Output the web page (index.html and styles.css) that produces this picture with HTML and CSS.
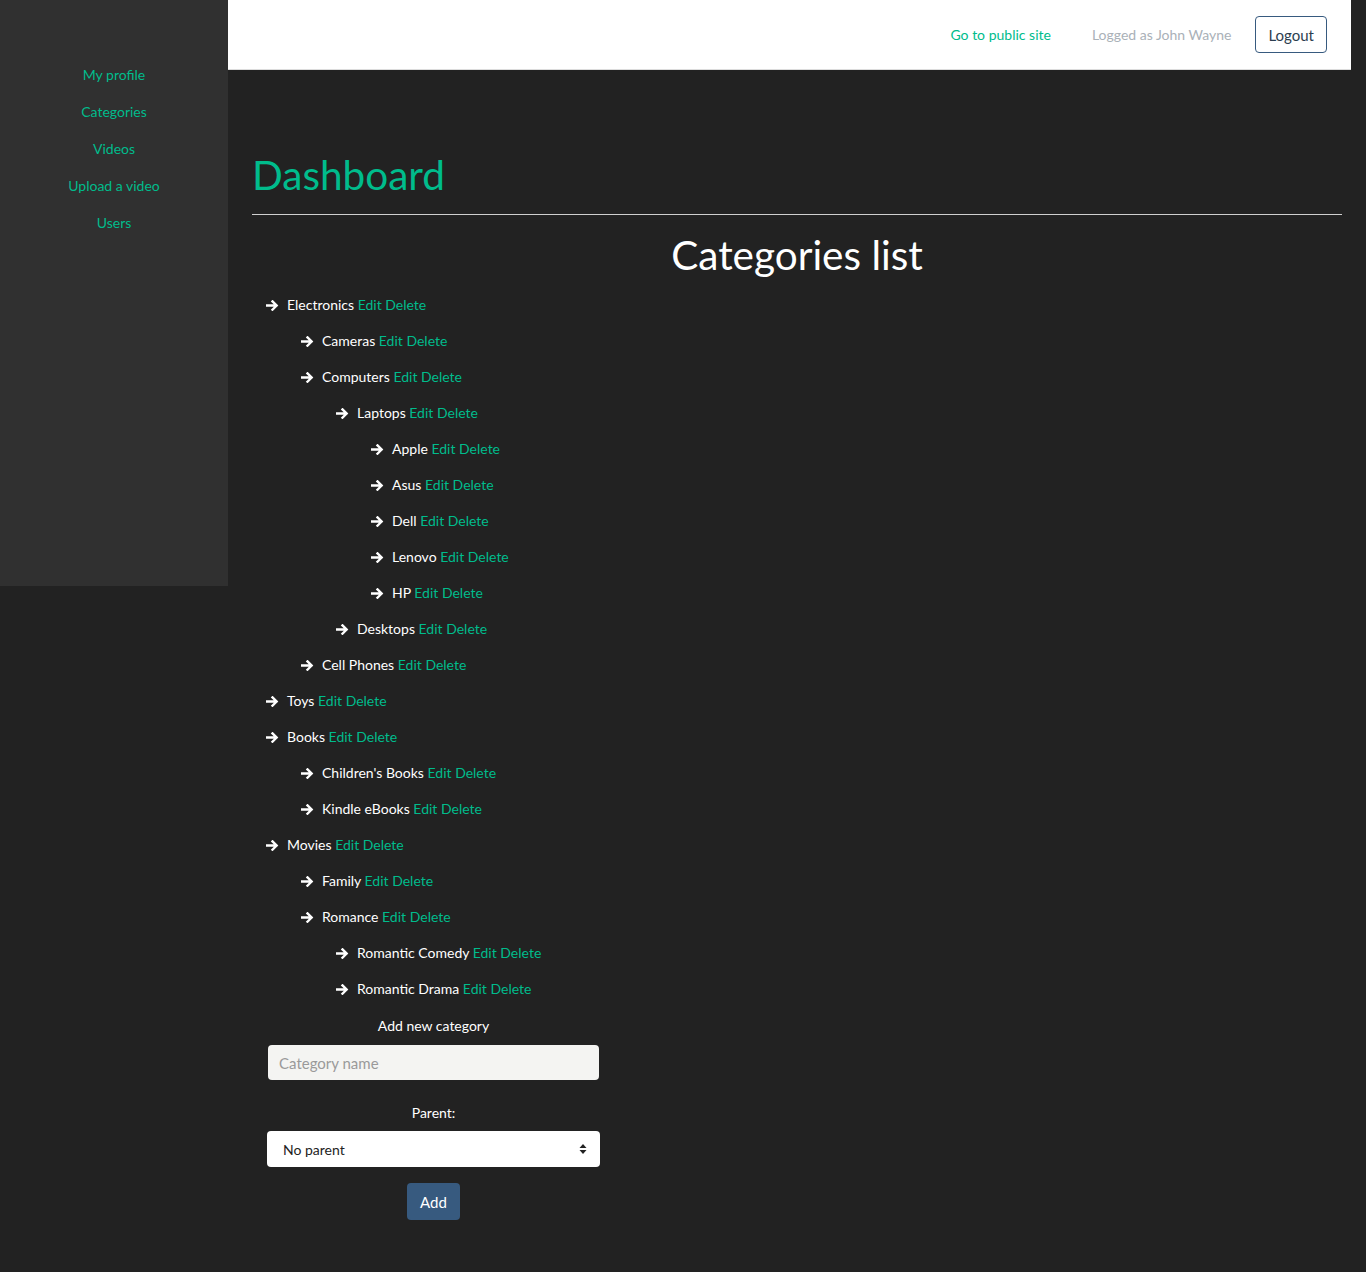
FILE: index.html
```html
<!DOCTYPE html>
<html>
<head>
<meta charset="utf-8">
<title>Dashboard</title>
<link rel="stylesheet" href="styles.css">
</head>
<body>
<div class="layout">
  <aside class="sidebar">
    <nav class="side-nav">
      <a href="#">My profile</a>
      <a href="#">Categories</a>
      <a href="#">Videos</a>
      <a href="#">Upload a video</a>
      <a href="#">Users</a>
    </nav>
  </aside>
  <div class="main">
    <header class="topbar">
      <a class="public" href="#">Go to public site</a>
      <span class="logged">Logged as John Wayne</span>
      <button class="logout">Logout</button>
    </header>
    <div class="content">
      <h1 class="title">Dashboard</h1>
      <hr class="rule">
      <h2 class="subtitle">Categories list</h2>
      <div class="col">
        <ul class="tree">
          <li><div class="item"><svg class="arrow" viewBox="0 0 14 12"><path d="M1 6H11M7 1.5L11.5 6L7 10.5" fill="none" stroke="#fff" stroke-width="2.6" stroke-linecap="square"/></svg>Electronics <a href="#">Edit</a> <a href="#">Delete</a></div>
            <ul class="tree">
              <li><div class="item"><svg class="arrow" viewBox="0 0 14 12"><path d="M1 6H11M7 1.5L11.5 6L7 10.5" fill="none" stroke="#fff" stroke-width="2.6" stroke-linecap="square"/></svg>Cameras <a href="#">Edit</a> <a href="#">Delete</a></div></li>
              <li><div class="item"><svg class="arrow" viewBox="0 0 14 12"><path d="M1 6H11M7 1.5L11.5 6L7 10.5" fill="none" stroke="#fff" stroke-width="2.6" stroke-linecap="square"/></svg>Computers <a href="#">Edit</a> <a href="#">Delete</a></div>
                <ul class="tree">
                  <li><div class="item"><svg class="arrow" viewBox="0 0 14 12"><path d="M1 6H11M7 1.5L11.5 6L7 10.5" fill="none" stroke="#fff" stroke-width="2.6" stroke-linecap="square"/></svg>Laptops <a href="#">Edit</a> <a href="#">Delete</a></div>
                    <ul class="tree">
                      <li><div class="item"><svg class="arrow" viewBox="0 0 14 12"><path d="M1 6H11M7 1.5L11.5 6L7 10.5" fill="none" stroke="#fff" stroke-width="2.6" stroke-linecap="square"/></svg>Apple <a href="#">Edit</a> <a href="#">Delete</a></div></li>
                      <li><div class="item"><svg class="arrow" viewBox="0 0 14 12"><path d="M1 6H11M7 1.5L11.5 6L7 10.5" fill="none" stroke="#fff" stroke-width="2.6" stroke-linecap="square"/></svg>Asus <a href="#">Edit</a> <a href="#">Delete</a></div></li>
                      <li><div class="item"><svg class="arrow" viewBox="0 0 14 12"><path d="M1 6H11M7 1.5L11.5 6L7 10.5" fill="none" stroke="#fff" stroke-width="2.6" stroke-linecap="square"/></svg>Dell <a href="#">Edit</a> <a href="#">Delete</a></div></li>
                      <li><div class="item"><svg class="arrow" viewBox="0 0 14 12"><path d="M1 6H11M7 1.5L11.5 6L7 10.5" fill="none" stroke="#fff" stroke-width="2.6" stroke-linecap="square"/></svg>Lenovo <a href="#">Edit</a> <a href="#">Delete</a></div></li>
                      <li><div class="item"><svg class="arrow" viewBox="0 0 14 12"><path d="M1 6H11M7 1.5L11.5 6L7 10.5" fill="none" stroke="#fff" stroke-width="2.6" stroke-linecap="square"/></svg>HP <a href="#">Edit</a> <a href="#">Delete</a></div></li>
                    </ul>
                  </li>
                  <li><div class="item"><svg class="arrow" viewBox="0 0 14 12"><path d="M1 6H11M7 1.5L11.5 6L7 10.5" fill="none" stroke="#fff" stroke-width="2.6" stroke-linecap="square"/></svg>Desktops <a href="#">Edit</a> <a href="#">Delete</a></div></li>
                </ul>
              </li>
              <li><div class="item"><svg class="arrow" viewBox="0 0 14 12"><path d="M1 6H11M7 1.5L11.5 6L7 10.5" fill="none" stroke="#fff" stroke-width="2.6" stroke-linecap="square"/></svg>Cell Phones <a href="#">Edit</a> <a href="#">Delete</a></div></li>
            </ul>
          </li>
          <li><div class="item"><svg class="arrow" viewBox="0 0 14 12"><path d="M1 6H11M7 1.5L11.5 6L7 10.5" fill="none" stroke="#fff" stroke-width="2.6" stroke-linecap="square"/></svg>Toys <a href="#">Edit</a> <a href="#">Delete</a></div></li>
          <li><div class="item"><svg class="arrow" viewBox="0 0 14 12"><path d="M1 6H11M7 1.5L11.5 6L7 10.5" fill="none" stroke="#fff" stroke-width="2.6" stroke-linecap="square"/></svg>Books <a href="#">Edit</a> <a href="#">Delete</a></div>
            <ul class="tree">
              <li><div class="item"><svg class="arrow" viewBox="0 0 14 12"><path d="M1 6H11M7 1.5L11.5 6L7 10.5" fill="none" stroke="#fff" stroke-width="2.6" stroke-linecap="square"/></svg>Children's Books <a href="#">Edit</a> <a href="#">Delete</a></div></li>
              <li><div class="item"><svg class="arrow" viewBox="0 0 14 12"><path d="M1 6H11M7 1.5L11.5 6L7 10.5" fill="none" stroke="#fff" stroke-width="2.6" stroke-linecap="square"/></svg>Kindle eBooks <a href="#">Edit</a> <a href="#">Delete</a></div></li>
            </ul>
          </li>
          <li><div class="item"><svg class="arrow" viewBox="0 0 14 12"><path d="M1 6H11M7 1.5L11.5 6L7 10.5" fill="none" stroke="#fff" stroke-width="2.6" stroke-linecap="square"/></svg>Movies <a href="#">Edit</a> <a href="#">Delete</a></div>
            <ul class="tree">
              <li><div class="item"><svg class="arrow" viewBox="0 0 14 12"><path d="M1 6H11M7 1.5L11.5 6L7 10.5" fill="none" stroke="#fff" stroke-width="2.6" stroke-linecap="square"/></svg>Family <a href="#">Edit</a> <a href="#">Delete</a></div></li>
              <li><div class="item"><svg class="arrow" viewBox="0 0 14 12"><path d="M1 6H11M7 1.5L11.5 6L7 10.5" fill="none" stroke="#fff" stroke-width="2.6" stroke-linecap="square"/></svg>Romance <a href="#">Edit</a> <a href="#">Delete</a></div>
                <ul class="tree">
                  <li><div class="item"><svg class="arrow" viewBox="0 0 14 12"><path d="M1 6H11M7 1.5L11.5 6L7 10.5" fill="none" stroke="#fff" stroke-width="2.6" stroke-linecap="square"/></svg>Romantic Comedy <a href="#">Edit</a> <a href="#">Delete</a></div></li>
                  <li><div class="item"><svg class="arrow" viewBox="0 0 14 12"><path d="M1 6H11M7 1.5L11.5 6L7 10.5" fill="none" stroke="#fff" stroke-width="2.6" stroke-linecap="square"/></svg>Romantic Drama <a href="#">Edit</a> <a href="#">Delete</a></div></li>
                </ul>
              </li>
            </ul>
          </li>
        </ul>
        <form class="add-form">
          <div class="label">Add new category</div>
          <input class="field" type="text" placeholder="Category name">
          <div class="label parent-label">Parent:</div>
          <div class="select-wrap">
            <select class="select"><option>No parent</option></select>
            <svg class="caret" viewBox="0 0 8 12"><path d="M4 1L7.5 5H0.5Z M4 11L7.5 7H0.5Z" fill="#222"/></svg>
          </div>
          <div class="actions"><button type="button" class="add">Add</button></div>
        </form>
      </div>
    </div>
  </div>
</div>
</body>
</html>
```
FILE: styles.css
```css
html, body {
  margin: 0;
  padding: 0;
  background: #222222;
  font-family: Lato, "Open Sans", sans-serif;
  color: #ffffff;
}

a {
  color: #00bc8c;
  text-decoration: none;
}

.layout {
  display: flex;
  align-items: flex-start;
}

.sidebar {
  width: 228px;
  flex: 0 0 228px;
  height: 586px;
  background: #303030;
}

.side-nav {
  display: flex;
  flex-direction: column;
  align-items: center;
  padding-top: 56px;
}

.side-nav a {
  font-size: 14px;
  line-height: 37px;
}

.main {
  flex: 1;
  min-width: 0;
}

.topbar {
  height: 69px;
  margin-right: 15px;
  background: #ffffff;
  border-bottom: 1px solid #dcdcdc;
  display: flex;
  align-items: center;
  justify-content: flex-end;
  padding-right: 24px;
  font-size: 14px;
}

.public {
  margin-right: 41px;
}

.logged {
  color: #aab1b8;
  margin-right: 24px;
}

.logout {
  font-family: inherit;
  font-size: 15px;
  color: #2c3e50;
  background: #ffffff;
  border: 1px solid #375a7f;
  border-radius: 4px;
  height: 37px;
  padding: 0 12px;
  margin: 0;
}

.content {
  padding: 0 24px;
}

.title {
  margin: 83px 0 0;
  font-size: 40.5px;
  font-weight: 400;
  line-height: 1.1;
  color: #00bc8c;
}

.rule {
  margin: 16px 0 0;
  border: 0;
  border-top: 1px solid #d0d0d0;
  height: 0;
}

.subtitle {
  margin: 16px 0 0;
  text-align: center;
  font-size: 40.5px;
  font-weight: 400;
  line-height: 1.2;
  color: #ffffff;
}

.col {
  width: 333px;
  margin-left: 15px;
  margin-top: 8px;
}

.tree {
  list-style: none;
  margin: 0;
  padding: 0;
}

.tree .tree {
  padding-left: 35px;
}

.item {
  display: block;
  line-height: 36px;
  height: 36px;
  font-size: 14px;
  white-space: nowrap;
}

.arrow {
  display: inline-block;
  vertical-align: middle;
  width: 13px;
  height: 11px;
  margin: -2px 8px 0 -1px;
}

.add-form {
  display: flex;
  flex-direction: column;
  margin-top: 9px;
}

.label {
  text-align: center;
  font-size: 14px;
  line-height: 20px;
}

.field {
  margin: 9px 1px 0;
  height: 35px;
  box-sizing: border-box;
  border: 0;
  border-radius: 4px;
  background: #f4f4f2;
  padding: 0 11px;
  font-family: inherit;
  font-size: 15px;
  color: #222;
}

.field::placeholder {
  color: #9a9a9a;
}

.parent-label {
  margin-top: 23px;
}

.select-wrap {
  position: relative;
  margin-top: 8px;
}

.select {
  width: 100%;
  height: 36px;
  box-sizing: border-box;
  border: 0;
  border-radius: 4px;
  background: #ffffff;
  padding: 0 16px;
  font-family: inherit;
  font-size: 14px;
  color: #222;
  appearance: none;
  -webkit-appearance: none;
}

.caret {
  position: absolute;
  right: 13px;
  top: 12px;
  width: 8px;
  height: 12px;
  pointer-events: none;
}

.actions {
  display: flex;
  justify-content: center;
  margin-top: 16px;
}

.add {
  height: 37px;
  padding: 0 13px;
  border: 0;
  border-radius: 4px;
  background: #375a7f;
  color: #ffffff;
  font-family: inherit;
  font-size: 15px;
}
```
